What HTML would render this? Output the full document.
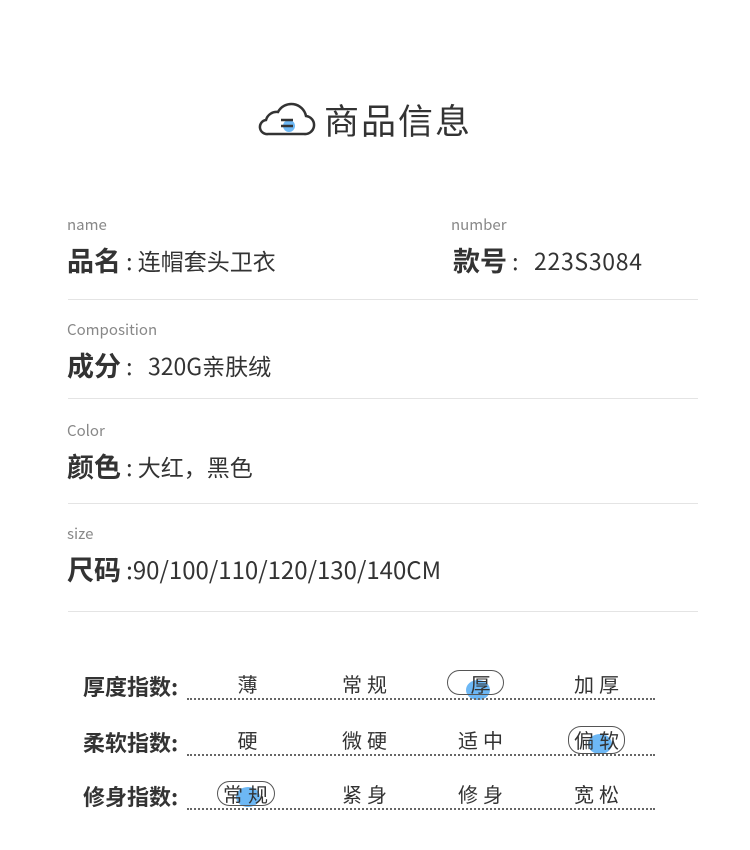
<!DOCTYPE html>
<html><head><meta charset="utf-8"><style>
body{margin:0;width:750px;height:850px;background:#fff;font-family:"Noto Sans CJK SC","Liberation Sans",sans-serif;color:#333;position:relative;overflow:hidden}
.a{position:absolute;white-space:nowrap;line-height:1}
.sm{font-size:15px;color:#888}
.lb{font-size:23px;color:#333}
.lb b{font-weight:bold;font-size:27px;vertical-align:-1px}
.hr{position:absolute;left:68px;width:630px;height:1px;background:#e4e4e4}
.k{position:absolute;left:83px;font-size:22px;font-weight:bold;color:#333;line-height:1}
.dot{position:absolute;left:187px;width:468px;border-top:2px dotted #666}
.o{position:absolute;font-size:20px;color:#333;transform:translateX(-50%);letter-spacing:5px;line-height:1}
.pill{position:absolute;border:1.5px solid #555;border-radius:13px;height:23px}
.bl{position:absolute;border-radius:50%;background:#6db8f5}
</style></head><body>
<svg class="a" style="left:256px;top:98px" width="60" height="42" viewBox="0 0 60 42">
<path d="M12 36 H48 A9 9 0 0 0 50 18 A15 15 0 0 0 22 14 A11 11 0 0 0 10 22 A7 7 0 0 0 12 36 Z" fill="none" stroke="#333" stroke-width="2.5"/>
<circle cx="33" cy="28" r="6" fill="#6db8f5"/>
<line x1="25" y1="22" x2="37" y2="22" stroke="#333" stroke-width="2.5"/>
<line x1="25" y1="28" x2="37" y2="28" stroke="#333" stroke-width="2.5"/>
</svg>
<div class="a" style="left:324px;top:102px;font-size:35px;letter-spacing:2px;color:#333">商品信息</div>

<div class="a sm" style="left:67px;top:217px">name</div>
<div class="a lb" style="left:67px;top:246px"><b>品名</b> :&nbsp;连帽套头卫衣</div>
<div class="a sm" style="left:451px;top:217px">number</div>
<div class="a lb" style="left:453px;top:246px"><b>款号</b> :&nbsp;&nbsp; <span style="letter-spacing:0.7px">223S3084</span></div>
<div class="hr" style="top:299px"></div>

<div class="a sm" style="left:67px;top:322px">Composition</div>
<div class="a lb" style="left:67px;top:351px"><b>成分</b> :&nbsp;&nbsp; 320G亲肤绒</div>
<div class="hr" style="top:398px"></div>

<div class="a sm" style="left:67px;top:423px">Color</div>
<div class="a lb" style="left:67px;top:452px"><b>颜色</b> :&nbsp;大红，黑色</div>
<div class="hr" style="top:503px"></div>

<div class="a sm" style="left:67px;top:526px">size</div>
<div class="a lb" style="left:67px;top:555px"><b>尺码</b> <span style="font-size:24px">:90/100/110/120/130/140CM</span></div>
<div class="hr" style="top:611px"></div>

<div class="bl" style="left:466px;top:680px;width:24px;height:20px"></div>
<div class="pill" style="left:447px;top:670px;width:55px"></div>
<div class="bl" style="left:588px;top:734px;width:24px;height:20px"></div>
<div class="pill" style="left:568px;top:726px;width:55px;height:26px"></div>
<div class="bl" style="left:236px;top:787px;width:24px;height:20px"></div>
<div class="pill" style="left:217px;top:781px;width:56px"></div>

<div class="k" style="top:675px">厚度指数:</div>
<div class="dot" style="top:698px"></div>
<div class="o" style="left:250px;top:674px">薄</div>
<div class="o" style="left:367px;top:674px">常规</div>
<div class="o" style="left:483px;top:674px">厚</div>
<div class="o" style="left:599px;top:674px">加厚</div>

<div class="k" style="top:731px">柔软指数:</div>
<div class="dot" style="top:754px"></div>
<div class="o" style="left:250px;top:730px">硬</div>
<div class="o" style="left:367px;top:730px">微硬</div>
<div class="o" style="left:483px;top:730px">适中</div>
<div class="o" style="left:599px;top:730px">偏软</div>

<div class="k" style="top:785px">修身指数:</div>
<div class="dot" style="top:808px"></div>
<div class="o" style="left:248px;top:784px">常规</div>
<div class="o" style="left:367px;top:784px">紧身</div>
<div class="o" style="left:483px;top:784px">修身</div>
<div class="o" style="left:599px;top:784px">宽松</div>
</body></html>
